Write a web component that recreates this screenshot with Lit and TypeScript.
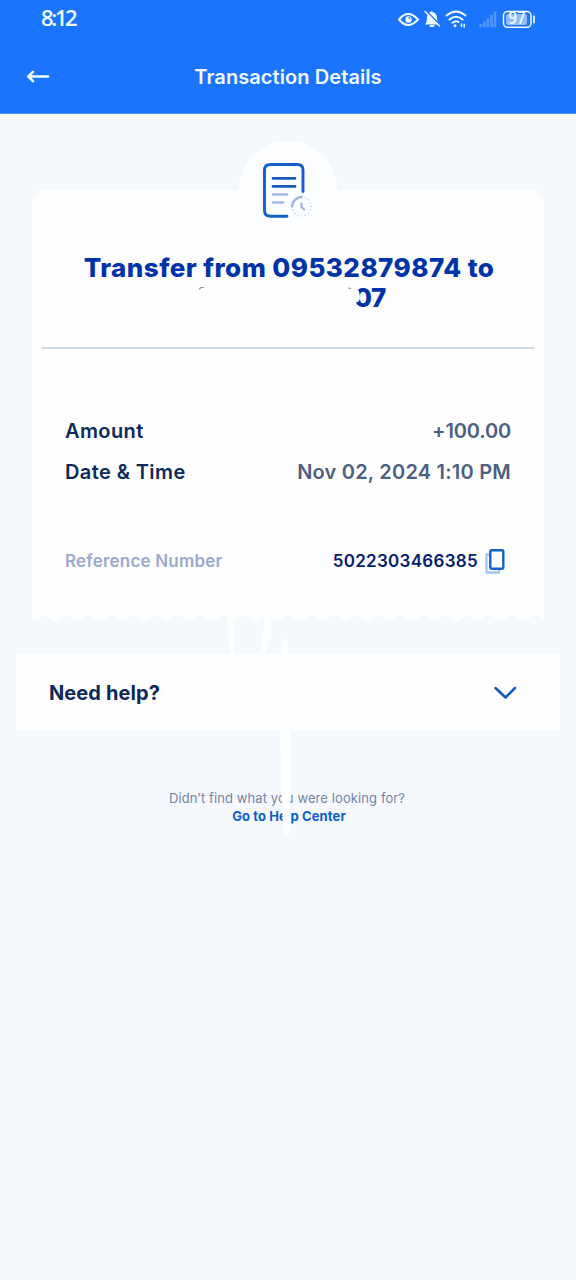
import { LitElement, html, css, svg } from "lit";
import { customElement } from "lit/decorators.js";

const tooth = 22.26;
const edge = () => {
  let d = "M0 0V9";
  for (let i = 0; i < 23; i++) {
    const x = 12.5 + i * tooth;
    d += `L${x - 9} 9Q${x - 6} 8 ${x - 3} 4Q${x} 1 ${x + 3} 4Q${x + 6} 8 ${x + 9} 9`;
  }
  return d + "L512 9V0Z";
};

@customElement("app-root")
export class AppRoot extends LitElement {
  static styles = css`
    :host { display: block; }
    .page { position: relative; box-sizing: border-box; height: 1280px; background: #f5f9fe; font-family: Inter, "Liberation Sans", sans-serif; overflow: hidden; }
    .page * { box-sizing: border-box; white-space: nowrap; }
    svg { display: block; flex: none; }
    .header { height: 114px; background: #1b74fd; color: #f1fbff; border-bottom: 1px solid #4b94fa; }
    .status { height: 38px; display: flex; justify-content: space-between; padding: 0 36px 0 41px; }
    .clock { font: 600 22px/34px "Open Sans", sans-serif; letter-spacing: -2.4px; }
    .nav { height: 76px; display: grid; grid-template-columns: 76px 1fr 76px; align-items: center; }
    .back { padding-left: 26px; }
    .title { text-align: center; font-weight: 600; font-size: 20px; letter-spacing: 0.08px; padding-top: 2px; }
    .receipt { margin: 27px 32px 0; }
    .badge { display: flex; justify-content: center; height: 49px; }
    .disc { width: 98px; height: 98px; border-radius: 50%; background: #fdfeff; flex: none; padding: 20px 0 0 22px; }
    .card { background: #fefeff; border-radius: 14px 14px 0 0; height: 422px; padding: 63px 10px 0; }
    .heading { text-align: center; font-weight: 800; font-size: 26px; line-height: 29px; letter-spacing: 0.45px; color: #0133a8; padding-left: 2px; }
    .masked { height: 30px; display: flex; justify-content: flex-start; padding: 1px 0 0 152px; }
    .digits { position: relative; width: 190px; text-align: right; letter-spacing: -0.4px; }
    .smudge { position: absolute; left: 0; top: 0; }
    .rule { height: 2px; background: #cfdbe2; margin-top: 35px; }
    .row { display: flex; justify-content: space-between; align-items: center; padding: 0 23px; height: 42px; font-size: 20px; font-weight: 600; letter-spacing: 0.4px; }
    .first { margin-top: 61px; height: 41px; }
    .label { color: #0c2a59; }
    .value { color: #4c6082; letter-spacing: 0.22px; }
    .amount { letter-spacing: -0.15px; }
    .reference { margin-top: 47px; font-size: 17px; letter-spacing: 0.2px; }
    .muted { color: #9ba9cd; }
    .copy { display: flex; align-items: center; gap: 7px; color: #04206d; padding-right: 5px; letter-spacing: 0.3px; }
    .help { margin: 33px 16px 0; height: 76px; background: #fefeff; display: flex; align-items: center; justify-content: space-between; padding: 2px 43px 0 33px; color: #0c2a59; font-size: 20px; font-weight: 700; letter-spacing: 0.1px; }
    .footer { margin-top: 59px; text-align: center; font-size: 13px; line-height: 18px; color: #7484a3; padding-right: 2px; letter-spacing: 0.1px; }
    .link { color: #0b5ecb; font-weight: 700; padding-left: 4px; }
    .strokes { position: absolute; left: 220px; top: 610px; }
  `;

  render() {
    return html`<div class="page">
      <div class="header">
        <div class="status">
          <div class="clock">8:12</div>
          <svg width="142" height="38" viewBox="398 0 142 38" fill="none" stroke="#eefaff" stroke-width="2" stroke-linecap="round">
            <path d="M399 19.5Q408 8.500 418 19.500Q408 30.500 399 19.500Z" />
            <circle cx="408.500" cy="19.500" r="3.200" fill="#eefaff" stroke="none" /><circle cx="409.500" cy="18" r=".9" fill="#1b74fd" stroke="none" />
            <path d="M425 24.500Q427 22 427 18Q427 13.500 430 12.300Q431.500 10 433 12.300Q437 13.500 437 18Q437 22 439 24.500Z" fill="#eefaff" stroke="none" />
            <path d="M430.500 26h3" /><path d="M425.500 10.500L440.500 25" stroke="#1b74fd" stroke-width="1.500" /><path d="M425 11.500L439.500 26" stroke-width="1.300" />
            <path d="M446.500 15.500Q456 7.500 465.500 15.500M449.500 19.500Q456 14 462.500 19.500M452.500 22.800Q456 20 458.500 22" />
            <circle cx="455" cy="25.700" r="1.500" fill="#eefaff" stroke="none" /><path d="M461.500 26.500v-2.500M464.200 24.500v2.500" stroke-width="1.500" />
            <g stroke="#4f97ff" stroke-width="2.600" stroke-linecap="butt"><path d="M480.700 27v-3M484.300 27v-5.500M487.900 27v-8.500M491.500 27v-12M495 27v-15.500" /></g>
            <rect x="503.500" y="11.500" width="27.500" height="15.800" rx="4" stroke-width="1.500" /><rect x="506" y="14" width="21" height="11" rx="2" fill="#8fbdff" stroke="none" />
            <path d="M534 16.500v6" stroke-width="1.800" />
            <text x="508.500" y="23.500" fill="#f5fcff" stroke="none" font-family="Open Sans" font-weight="600" font-size="18" textLength="17" lengthAdjust="spacingAndGlyphs">97</text>
          </svg>
        </div>
        <div class="nav">
          <div class="back"><svg width="24" height="16" fill="none" stroke="#f1fbff" stroke-width="2.600" stroke-linecap="round" stroke-linejoin="round"><path d="M22 8.500H2.500M7 3.800L2.300 8.500L7 13.200" /></svg></div>
          <div class="title">Transaction Details</div>
        </div>
      </div>
      <div class="receipt">
        <div class="badge"><div class="disc">
          <svg width="56" height="60" viewBox="261 161 56 60" fill="none" stroke-linecap="round">
            <path d="M303 191.500V170Q303 164.500 297.500 164.500H270.500Q264.500 164.500 264.500 170V210.500Q264.500 216.200 270.500 216.200H287" stroke="#1260c8" stroke-width="2.900" />
            <path d="M273 178.300H295M273 186.400H295" stroke="#1659b8" stroke-width="2.700" />
            <path d="M273 194.500H287M273 202.600H283" stroke="#9fb9df" stroke-width="2.500" />
            <path d="M292 206.500A9.700 9.700 0 0 1 301.500 197" stroke="#9fb5df" stroke-width="2.400" />
            <circle cx="301.500" cy="206.500" r="9.500" stroke="#a9b9db" stroke-width="1.200" stroke-dasharray=".1 3.600" />
            <path d="M301.500 203.500V207L304.300 209.500" stroke="#9fb5df" stroke-width="2.200" />
          </svg></div></div>
        <div class="card">
          <div class="heading">Transfer from 09532879874 to
            <div class="masked"><div class="digits">07<svg class="smudge" width="190" height="29" viewBox="196 283 190 29">
              <path d="M340 283H350L355 288Q359 289 359.500 294Q361 299 358 302L353 303V312H340Z" fill="#fefeff" />
              <path d="M199 289.500L201 287.500H204M348 288L351 288.500" fill="none" stroke="#8a98bd" stroke-width="1.200" />
            </svg></div></div>
          </div>
          <div class="rule"></div>
          <div class="row first"><span class="label">Amount</span><span class="value amount">+100.00</span></div>
          <div class="row"><span class="label">Date &amp; Time</span><span class="value">Nov 02, 2024 1:10 PM</span></div>
          <div class="row reference"><span class="muted">Reference Number</span><span class="copy">5022303466385
            <svg width="21" height="26" viewBox="485 546 21 26" fill="none" stroke-linejoin="round"><path d="M489 552.500H486.500V570.500H499V567.500" stroke="#a3c4f2" stroke-width="2.300" /><rect x="490.300" y="548.300" width="13" height="18.500" rx="1.500" stroke="#1162cb" stroke-width="2.400" /></svg></span></div>
        </div>
        <svg width="512" height="9" viewBox="0 0 512 9">${svg`<path d=${edge()} fill="#fefeff" />`}</svg>
      </div>
      <div class="help"><span>Need help?</span><svg width="24" height="16" fill="none" stroke="#1259bd" stroke-width="2.500" stroke-linecap="round" stroke-linejoin="round"><path d="M2.500 3L12.500 12.500L22 3" /></svg></div>
      <div class="footer"><div class="hint">Didn’t find what you were looking for?</div><div class="link">Go to Help Center</div></div>
      <svg class="strokes" width="80" height="230" viewBox="220 610 80 230" fill="#fdfefe"><path d="M225 610L228 630L230 655H235L233 640V610ZM265 610L263 637L260 655H266L270 637V610ZM284 637L281 655H289L287 642ZM280 725H291L290 830Q287 838 283 834Z" /></svg>
    </div>`;
  }
}
